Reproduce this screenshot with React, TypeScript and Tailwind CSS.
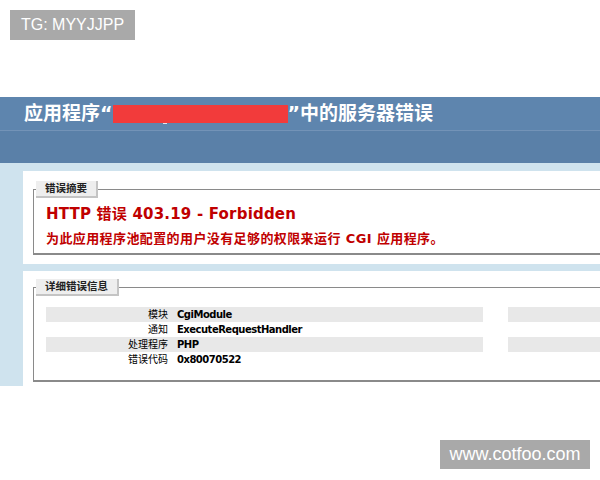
const SANS = 'font-["DejaVu_Sans","Noto_Sans_CJK_SC",sans-serif]';

const details = [
  { label: '模块', value: 'CgiModule' },
  { label: '通知', value: 'ExecuteRequestHandler' },
  { label: '处理程序', value: 'PHP' },
  { label: '错误代码', value: '0x80070522' },
];

function Legend({ children }: { children: React.ReactNode }) {
  return (
    <legend className="ml-[2px] h-[17px] px-[9px] bg-[#eeeeee] border-r-2 border-b-2 border-[#c4c4c4] text-[10.5px] leading-[15px] font-bold text-[#222]">
      {children}
    </legend>
  );
}

export default function App() {
  return (
    <div className={`relative w-[600px] h-[480px] overflow-hidden bg-white ${SANS}`}>
      {/* watermark top-left */}
      <div className='absolute left-[10px] top-[10px] w-[125px] h-[30px] bg-[#a9a9a9] flex items-center justify-center text-white text-[16px] font-["Liberation_Sans",sans-serif]'>
        TG: MYYJJPP
      </div>

      <div className="pt-[97px]">
        {/* Header */}
        <div className="h-[33px] bg-[#5e85ae] flex items-center pl-[24px] text-white text-[19px] font-bold whitespace-nowrap">
          <span>应用程序“</span>
          <span className="relative w-[175px] h-[18px] bg-[#f23b3b]">
            <span className="absolute left-[50px] bottom-[-1px] w-[4px] h-[1px] bg-white/80" />
          </span>
          <span>”中的服务器错误</span>
        </div>
        <div className="h-[33px] bg-[#5a80a8] border-t border-[#7393b7]" />

        {/* Content */}
        <div className="w-[720px] bg-[#cfe3ee] pl-[23px] pt-[8px]">
          <div className="bg-white pt-[10px] pb-[9px] pl-[10px]">
            <fieldset className="border border-[#8a8a8a] border-b-2 pb-[5px]">
              <Legend>错误摘要</Legend>
              <div className="pl-[12px]">
                <h2 className="mt-[7px] leading-[18px] text-[15px] font-bold tracking-[0.2px] text-[#c00000]">
                  HTTP 错误 403.19 - Forbidden
                </h2>
                <p className="mt-[7px] leading-[18px] text-[13px] font-bold tracking-[0.4px] text-[#c00000] whitespace-nowrap">
                  为此应用程序池配置的用户没有足够的权限来运行 CGI 应用程序。
                </p>
              </div>
            </fieldset>
          </div>

          <div className="mt-[7px] bg-white pt-[8px] pb-[4px] pl-[10px]">
            <fieldset className="border border-[#8a8a8a] border-b-2 pb-[13px]">
              <Legend>详细错误信息</Legend>
              <div className="mt-[11px] pl-[12px] flex gap-[25px]">
                <div className="w-[437px]">
                  {details.map((d, i) => (
                    <div
                      key={d.label}
                      className={`h-[15px] flex items-center text-[10px] text-black ${i % 2 === 0 ? 'bg-[#e8e8e8]' : ''}`}
                    >
                      <span className="w-[122px] text-right">{d.label}</span>
                      <span className="pl-[9px] font-bold tracking-[-0.5px]">{d.value}</span>
                    </div>
                  ))}
                </div>
                <div className="w-[200px]">
                  {details.map((d, i) => (
                    <div key={d.label} className={`h-[15px] ${i % 2 === 0 ? 'bg-[#e8e8e8]' : ''}`} />
                  ))}
                </div>
              </div>
            </fieldset>
          </div>
        </div>
      </div>

      {/* watermark bottom-right */}
      <div className='absolute left-[440px] top-[440px] w-[150px] h-[29px] bg-[#a9a9a9] flex items-center justify-center text-white text-[18px] font-["Liberation_Sans",sans-serif]'>
        www.cotfoo.com
      </div>
    </div>
  );
}
